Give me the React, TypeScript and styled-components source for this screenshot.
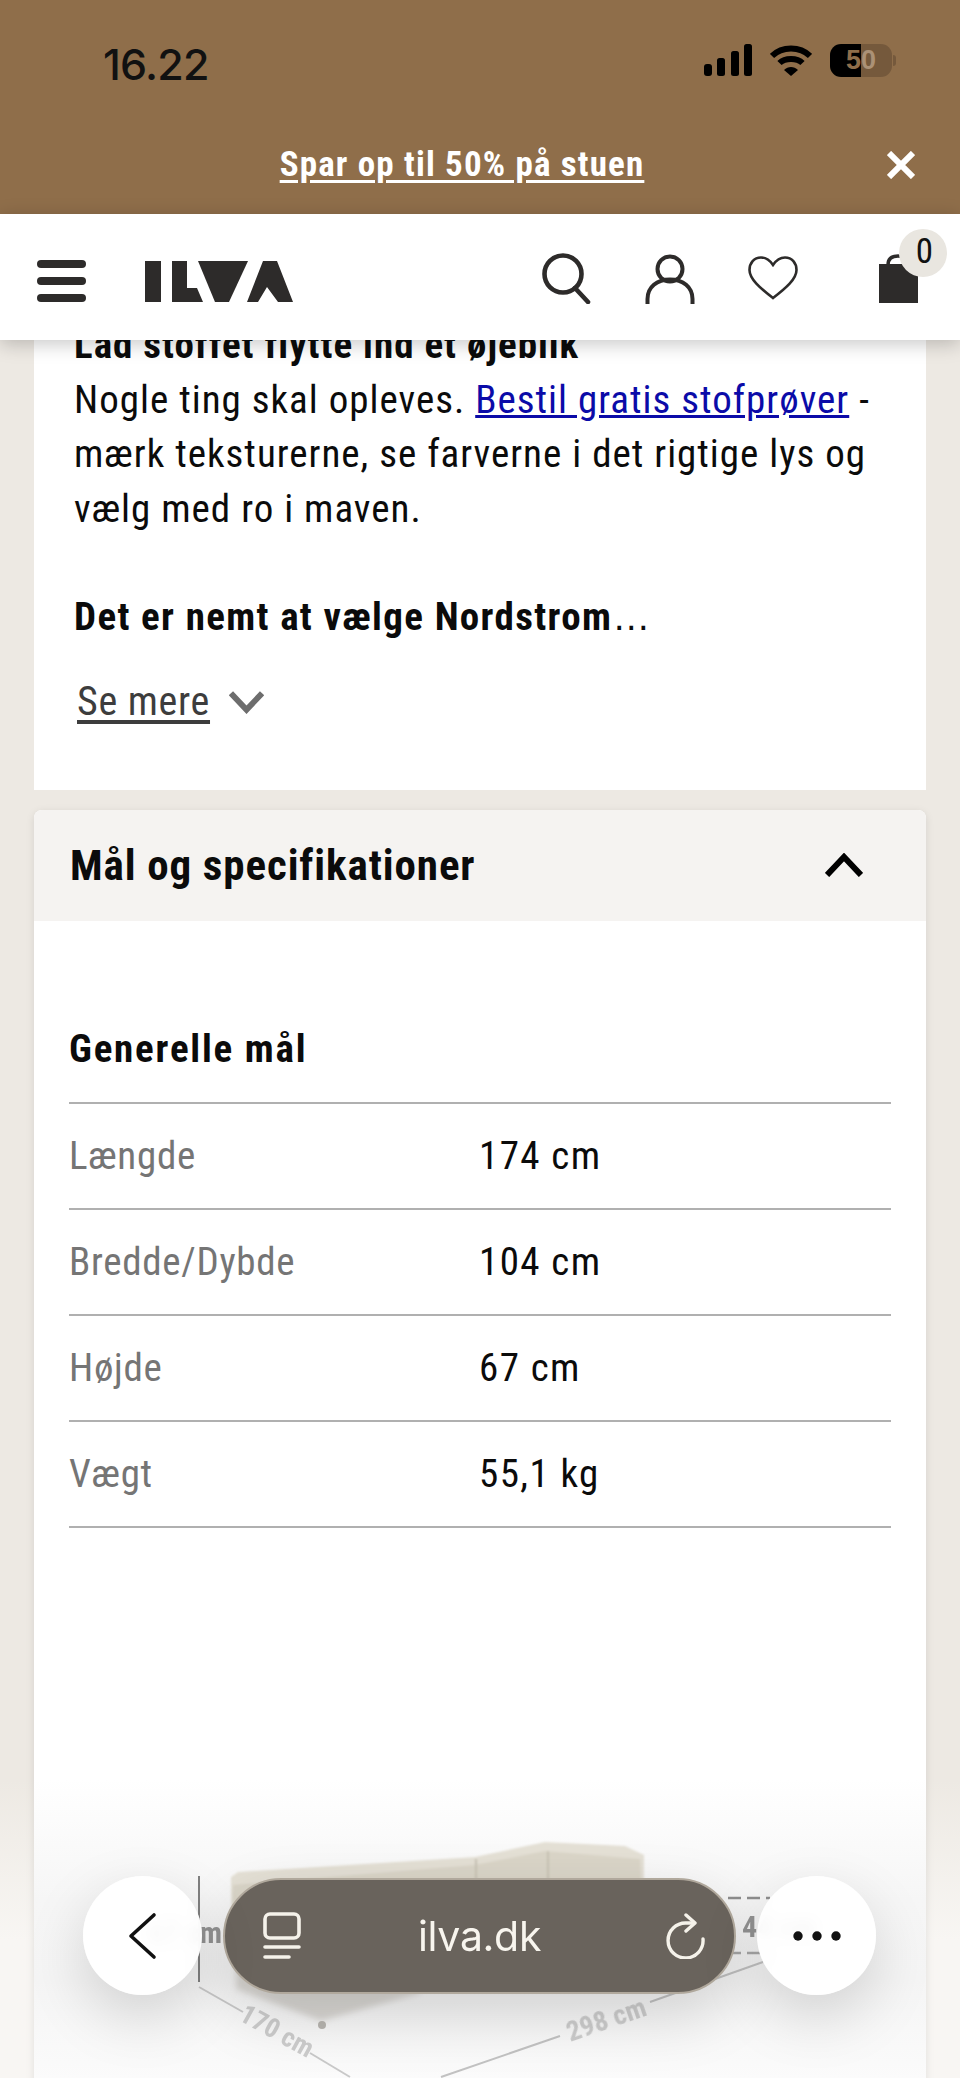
import React from "react";
import styled, { createGlobalStyle } from "styled-components";

const GlobalStyle = createGlobalStyle`
  html, body {
    margin: 0;
    padding: 0;
    background: #ede9e3;
  }
  * {
    box-sizing: border-box;
  }
`;

const Page = styled.div`
  position: relative;
  width: 960px;
  height: 2078px;
  overflow: hidden;
  display: flex;
  flex-direction: column;
  background: linear-gradient(to bottom, #ede9e3 0, #ede9e3 1780px, #f8f6f3 1940px);
  font-family: Roboto, "Liberation Sans", Arial, sans-serif;
  font-stretch: 75%;
  color: #0b0b0b;
`;

const TopBanner = styled.div`
  height: 214px;
  flex: none;
  display: flex;
  flex-direction: column;
  background: #8f6e4a;
`;

const StatusBar = styled.div`
  height: 126px;
  padding: 44px 68px 0 103px;
  display: flex;
  justify-content: space-between;
  align-items: flex-start;
`;

const Time = styled.span`
  font-family: Inter, "Liberation Sans", Arial, sans-serif;
  font-stretch: 100%;
  font-weight: 500;
  font-size: 43px;
  line-height: 40px;
  letter-spacing: -0.8px;
  color: #111;
`;

const StatusIcons = styled.div`
  display: flex;
  align-items: center;
  gap: 18px;
  height: 33px;
`;

const Battery = styled.div`
  position: relative;
  width: 62px;
  height: 33px;
  border-radius: 11px;
  display: flex;
  align-items: center;
  justify-content: center;
  background: linear-gradient(to right, #000 50%, #75593c 50%);
  font-family: "Liberation Sans", Arial, sans-serif;
  font-stretch: 100%;
  font-weight: 700;
  font-size: 27px;

  &::after {
    content: "";
    position: absolute;
    right: -4px;
    top: 11px;
    width: 3px;
    height: 11px;
    border-radius: 0 3px 3px 0;
    background: #75593c;
  }
`;

const BatteryDigit = styled.span<{ $light?: boolean }>`
  color: ${(p) => (p.$light ? "#ab9176" : "#8f6e4a")};
`;

const PromoRow = styled.div`
  flex: 1;
  position: relative;
  display: flex;
  align-items: center;
  justify-content: center;
  padding: 0 36px 12px 0;
`;

const PromoLink = styled.a`
  font-weight: 700;
  font-size: 35px;
  letter-spacing: 1.15px;
  color: #fff;
  text-decoration: underline;
  text-underline-offset: 4px;
`;

const PromoClose = styled.svg`
  position: absolute;
  right: 45px;
  top: 25px;
`;

const Header = styled.header`
  position: relative;
  z-index: 2;
  height: 126px;
  flex: none;
  padding: 0 42px 0 37px;
  display: flex;
  align-items: flex-start;
  background: #fff;
  box-shadow: 0 4px 18px rgba(0, 0, 0, 0.22);
`;

const Burger = styled.div`
  margin-top: 46px;
  width: 49px;
  display: flex;
  flex-direction: column;
  gap: 9px;
`;

const BurgerBar = styled.span`
  display: block;
  height: 8px;
  border-radius: 4px;
  background: #2d2b2a;
`;

const Logo = styled.svg`
  margin: 47px 0 0 59px;
`;

const HeaderIcons = styled.div`
  margin-left: auto;
  display: flex;
  align-items: flex-start;
`;

const HeaderIcon = styled.svg<{ $top: number; $left?: number }>`
  display: block;
  margin-top: ${(p) => p.$top}px;
  margin-left: ${(p) => p.$left ?? 0}px;
`;

const BagWrap = styled.div`
  position: relative;
  margin-left: 81px;
  margin-top: 40px;
  width: 39px;
  height: 49px;
`;

const BagBadge = styled.span`
  position: absolute;
  left: 20px;
  top: -25px;
  width: 48px;
  height: 48px;
  border-radius: 50%;
  background: #e9e6e0;
  display: flex;
  align-items: center;
  justify-content: center;
  font-size: 35px;
  padding: 0 0 4px 3px;
  color: #111;
`;

const Content = styled.main`
  margin-top: -22px;
  padding: 0 34px;
  display: flex;
  flex-direction: column;
  gap: 20px;
`;

const DescriptionCard = styled.section`
  height: 472px;
  padding: 0 40px;
  background: #fff;
`;

const BodyText = styled.div`
  font-size: 39px;
  line-height: 54.5px;
  letter-spacing: 1px;
  white-space: nowrap;
`;

const Strong = styled.strong<{ $wide?: boolean }>`
  font-weight: 700;
  letter-spacing: ${(p) => (p.$wide ? "1.35px" : "1px")};
`;

const Ellipsis = styled.span`
  font-family: "Liberation Sans", Arial, sans-serif;
  font-stretch: 100%;
  font-size: 38px;
  letter-spacing: 0;
`;

const TextLink = styled.a`
  color: #0b0ba8;
  text-decoration: underline;
`;

const Spacer = styled.div`
  height: 54px;
`;

const MoreRow = styled.div`
  margin-top: 30px;
  padding-left: 3px;
  display: flex;
  align-items: center;
  gap: 19px;
`;

const MoreLink = styled.a`
  font-size: 40px;
  line-height: 54px;
  letter-spacing: 0.7px;
  color: #3d3d3d;
  text-decoration: underline;
  text-underline-offset: 5px;
`;

const SpecCard = styled.section`
  border-radius: 8px 8px 0 0;
  background: #fff;
  box-shadow: 0 2px 8px rgba(0, 0, 0, 0.1);
`;

const SpecHead = styled.div`
  height: 111px;
  padding: 0 63px 2px 36px;
  display: flex;
  align-items: center;
  justify-content: space-between;
  border-radius: 8px 8px 0 0;
  background: #f5f3f1;
`;

const SpecTitle = styled.h2`
  margin: 0;
  font-size: 43px;
  font-weight: 700;
  letter-spacing: 0.9px;
`;

const SpecBody = styled.div`
  padding: 106px 35px 0;
`;

const GroupTitle = styled.h3`
  margin: 0;
  height: 77px;
  border-bottom: 2px solid #b0b0b0;
  font-size: 39px;
  line-height: 44px;
  font-weight: 700;
  letter-spacing: 1.8px;
`;

const SpecRow = styled.div`
  height: 106px;
  display: grid;
  grid-template-columns: 410px 1fr;
  align-items: center;
  border-bottom: 2px solid #b0b0b0;
  font-size: 39px;
  letter-spacing: 1.4px;
`;

const SpecLabel = styled.span`
  color: #757575;
  letter-spacing: 0.7px;
`;

const Drawing = styled.svg`
  display: block;
  margin: 251px 0 0 -35px;
  background: linear-gradient(to bottom, #fff 0, #f6f6f6 120px, #f5f5f5 200px, #fbfbfb 300px);
`;

const Toolbar = styled.nav`
  position: absolute;
  left: 83px;
  bottom: 83px;
  width: 793px;
  display: flex;
  align-items: center;
  justify-content: space-between;
`;

const RoundButton = styled.div`
  width: 119px;
  height: 119px;
  border-radius: 50%;
  display: flex;
  align-items: center;
  justify-content: center;
  background: rgba(255, 255, 255, 0.93);
  backdrop-filter: blur(6px);
  box-shadow: 0 22px 60px rgba(0, 0, 0, 0.15);
`;

const AddressPill = styled.div`
  width: 513px;
  height: 116px;
  padding: 0 28px 0 38px;
  border-radius: 58px;
  display: flex;
  align-items: center;
  justify-content: space-between;
  background: #69635c;
  border: 2px solid #b0a89c;
  box-shadow: 0 22px 60px rgba(0, 0, 0, 0.15);
`;

const Address = styled.span`
  padding-right: 8px;
  font-family: Inter, "Liberation Sans", Arial, sans-serif;
  font-stretch: 100%;
  font-size: 41px;
  letter-spacing: -0.3px;
  color: #f8f5ee;
`;

const specs = [
  { label: "Længde", value: "174 cm" },
  { label: "Bredde/Dybde", value: "104 cm" },
  { label: "Højde", value: "67 cm" },
  { label: "Vægt", value: "55,1 kg" },
];

export default function App() {
  return (
    <Page>
      <GlobalStyle />
      <TopBanner>
        <StatusBar>
          <Time>16.22</Time>
          <StatusIcons>
            <svg width="48" height="33" viewBox="0 0 48 33" fill="#000">
              <rect x="0" y="20" width="8" height="12" rx="3" />
              <rect x="13" y="14" width="8" height="18" rx="2.5" />
              <rect x="27" y="7" width="8" height="25" rx="2.5" />
              <rect x="40" y="0" width="8" height="32" rx="2.5" />
            </svg>
            <svg width="42" height="32" viewBox="0 0 42 32" fill="none" stroke="#000" strokeWidth="6">
              <path d="M2 11 C12 1 30 1 40 11" />
              <path d="M9.5 18 C15 12.5 27 12.5 32.5 18" />
              <path d="M14 25 L21 31 L28 25 C24 21 18 21 14 25 Z" fill="#000" stroke="none" />
            </svg>
            <Battery>
              <BatteryDigit>5</BatteryDigit>
              <BatteryDigit $light>0</BatteryDigit>
            </Battery>
          </StatusIcons>
        </StatusBar>
        <PromoRow>
          <PromoLink>Spar op til 50% på stuen</PromoLink>
          <PromoClose width="28" height="28" viewBox="0 0 28 28" stroke="#fff" strokeWidth="6">
            <path d="M2 2 L26 26 M26 2 L2 26" />
          </PromoClose>
        </PromoRow>
      </TopBanner>

      <Header>
        <Burger>
          <BurgerBar />
          <BurgerBar />
          <BurgerBar />
        </Burger>
        <Logo width="148" height="41" viewBox="0 0 148 41" fill="#2d2b2a" aria-label="ILVA">
          <rect x="0" y="0" width="16" height="41" />
          <polygon points="27,0 42,0 42,27 52,27 58,41 27,41" />
          <polygon points="53,0 103,0 84,41 70,41" />
          <polygon points="102,41 118,0 132,0 148,41 133,41 122,26 113,41" />
        </Logo>
        <HeaderIcons>
          <HeaderIcon $top={38} width="50" height="52" viewBox="0 0 50 52" fill="none" stroke="#2d2b2a" strokeWidth="4.6">
            <circle cx="22" cy="22" r="18.5" />
            <path d="M34 36 L47 50" strokeLinecap="round" />
          </HeaderIcon>
          <HeaderIcon $top={40} $left={54} width="50" height="50" viewBox="0 0 50 50" fill="none" stroke="#2d2b2a" strokeWidth="4">
            <circle cx="25" cy="15" r="12.5" />
            <path d="M2.5 50 V45 C2.5 33 12 25.5 25 25.5 C38 25.5 47.5 33 47.5 45 V50" />
          </HeaderIcon>
          <HeaderIcon $top={42} $left={53} width="50" height="44" viewBox="0 0 50 44" fill="none" stroke="#2d2b2a" strokeWidth="2.6">
            <path d="M25 9 C21 3 17 1.5 13 1.5 C6 1.5 1.5 7 1.5 14 C1.5 23 12 32 25 42 C38 32 48.5 23 48.5 14 C48.5 7 44 1.5 37 1.5 C33 1.5 29 3 25 9 Z" />
          </HeaderIcon>
          <BagWrap>
            <svg width="39" height="49" viewBox="0 0 39 49" fill="#2d2b2a">
              <rect x="0" y="10" width="39" height="39" />
              <path d="M9 11 C9 4 14 2 19 2 C24 2 29 4 29 11" fill="none" stroke="#2d2b2a" strokeWidth="3.5" />
            </svg>
            <BagBadge>0</BagBadge>
          </BagWrap>
        </HeaderIcons>
      </Header>

      <Content>
        <DescriptionCard>
          <BodyText>
            <Strong>Lad stoffet flytte ind et øjeblik</Strong>
            <br />
            Nogle ting skal opleves. <TextLink>Bestil gratis stofprøver</TextLink> -
            <br />
            mærk teksturerne, se farverne i det rigtige lys og
            <br />
            vælg med ro i maven.
            <Spacer />
            <Strong $wide>Det er nemt at vælge Nordstrom</Strong>
            <Ellipsis>…</Ellipsis>
          </BodyText>
          <MoreRow>
            <MoreLink>Se mere</MoreLink>
            <svg width="35" height="24" viewBox="0 0 36 24" fill="none" stroke="#6d6d6d" strokeWidth="6">
              <path d="M2 3 L18 20 L34 3" />
            </svg>
          </MoreRow>
        </DescriptionCard>

        <SpecCard>
          <SpecHead>
            <SpecTitle>Mål og specifikationer</SpecTitle>
            <svg width="38" height="24" viewBox="0 0 38 24" fill="none" stroke="#000" strokeWidth="6">
              <path d="M2 22 L19 4 L36 22" />
            </svg>
          </SpecHead>
          <SpecBody>
            <GroupTitle>Generelle mål</GroupTitle>
            {specs.map((spec) => (
              <SpecRow key={spec.label}>
                <SpecLabel>{spec.label}</SpecLabel>
                <span>{spec.value}</span>
              </SpecRow>
            ))}
            {/* viewBox holds page coordinates, the sofa drawing runs on below the fold */}
            <Drawing width="892" height="320" viewBox="34 1780 892 320">
              <defs>
                <filter id="soft">
                  <feGaussianBlur stdDeviation="1.2" />
                </filter>
                <filter id="softer">
                  <feGaussianBlur stdDeviation="3" />
                </filter>
                <filter id="label">
                  <feGaussianBlur stdDeviation="0.6" />
                </filter>
              </defs>
              <g filter="url(#soft)">
                <polygon points="231,1878 238,1873 475,1858 545,1843 625,1847 644,1856 644,1960 231,1960" fill="#e4e0d5" />
                <polygon points="233,1886 475,1866 545,1852 640,1860 644,1960 233,1960" fill="#dad5c8" />
                <path d="M476 1860 V1900 M548 1852 V1900" stroke="#c6c1b3" strokeWidth="2" />
              </g>
              <g filter="url(#softer)">
                <polygon points="236,1990 321,2022 420,1994 420,1960 236,1960" fill="#d9d7d3" />
              </g>
              <circle cx="322" cy="2026" r="4" fill="#b8b5b0" />
              <path d="M199 1877 V1983" stroke="#808080" strokeWidth="2" />
              <path d="M199 1988 L243 2013 M310 2054 L350 2078" stroke="#c9c9c9" strokeWidth="2" fill="none" />
              <path d="M441 2078 L560 2037 M650 2003 L763 1963" stroke="#c2c2c2" strokeWidth="2" fill="none" />
              <path d="M728 1899 H770" stroke="#8f8f8f" strokeWidth="2.5" strokeDasharray="13 6" />
              <path d="M728 1954 H770" stroke="#a8a8a8" strokeWidth="2.5" strokeDasharray="13 6" />
              <g filter="url(#label)" fontWeight="700">
                <text x="277" y="2041" fontSize="27" fill="#cccccc" textAnchor="middle" transform="rotate(29 277 2032)">170 cm</text>
                <text x="606" y="2030" fontSize="28" fill="#cccccc" textAnchor="middle" transform="rotate(-19 606 2020)">298 cm</text>
                <text x="222" y="1944" fontSize="30" fill="#949494" textAnchor="end">67 cm</text>
                <text x="742" y="1938" fontSize="30" fill="#949494">44 cm</text>
              </g>
            </Drawing>
          </SpecBody>
        </SpecCard>
      </Content>

      <Toolbar>
        <RoundButton>
          <svg width="30" height="48" viewBox="0 0 30 48" fill="none" stroke="#111" strokeWidth="3.6" strokeLinecap="round" strokeLinejoin="round">
            <path d="M26 3 L3 24 L26 45" />
          </svg>
        </RoundButton>
        <AddressPill>
          <svg width="38" height="48" viewBox="0 0 38 48" fill="none" stroke="#f5f2ea" strokeWidth="3.6" strokeLinecap="round">
            <rect x="2" y="2" width="34" height="24" rx="5" />
            <path d="M2 35 H36 M2 45 H26" />
          </svg>
          <Address>ilva.dk</Address>
          <svg width="40" height="46" viewBox="0 0 40 46" fill="none" stroke="#f5f2ea" strokeWidth="3.4" strokeLinecap="round" strokeLinejoin="round">
            <path d="M37 26 A17.5 17.5 0 1 1 20 10 H28" />
            <path d="M20 2 L29 10 L20 18" />
          </svg>
        </AddressPill>
        <RoundButton>
          <svg width="48" height="10" viewBox="0 0 48 10" fill="#111">
            <circle cx="5" cy="5" r="4.7" />
            <circle cx="24" cy="5" r="4.7" />
            <circle cx="43" cy="5" r="4.7" />
          </svg>
        </RoundButton>
      </Toolbar>
    </Page>
  );
}
